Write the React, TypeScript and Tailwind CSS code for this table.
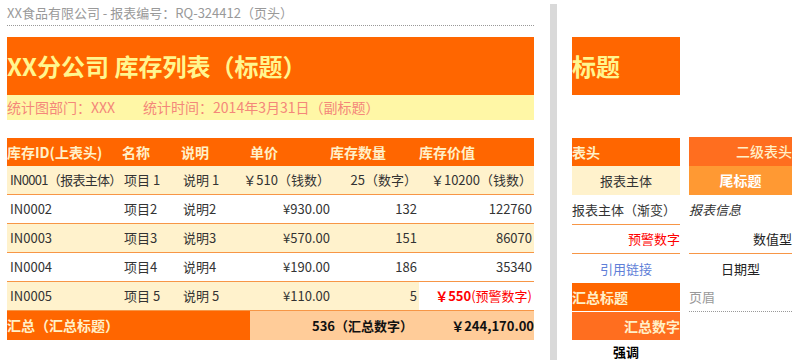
import React from 'react';

const font = { fontFamily: "'Noto Sans CJK SC', 'Noto Sans', sans-serif" };

const rows = [
  { id: 'IN0001（报表主体）', name: '项目 1', desc: '说明 1', price: '￥510（钱数）', qty: '25（数字）', value: '￥10200（钱数）', cream: true },
  { id: 'IN0002', name: '项目2', desc: '说明2', price: '¥930.00', qty: '132', value: '122760', cream: false },
  { id: 'IN0003', name: '项目3', desc: '说明3', price: '¥570.00', qty: '151', value: '86070', cream: true },
  { id: 'IN0004', name: '项目4', desc: '说明4', price: '¥190.00', qty: '186', value: '35340', cream: false },
];

const InventoryTable: React.FC = () => (
  <div className="mt-[18px] text-[13px] text-[#333]">
    {/* header */}
    <div className="grid grid-cols-[113px_59px_69px_80px_89px_117px] h-[28px] bg-[#FF6600] text-[14px] font-bold text-[#FFF0C8]">
      <div className="flex items-center">库存ID(上表头)</div>
      <div className="flex items-center pl-[2px]">名称</div>
      <div className="flex items-center pl-[2px]">说明</div>
      <div className="flex items-center pl-[2px]">单价</div>
      <div className="flex items-center pl-[2px]">库存数量</div>
      <div className="flex items-center pl-[2px]">库存价值</div>
    </div>

    {rows.map((r, i) => (
      <div
        key={r.id}
        className={`grid grid-cols-[113px_59px_69px_84px_87px_115px] h-[29px] border-b border-[#F79646] ${r.cream ? 'bg-[#FFF2CC]' : 'bg-white'}`}
      >
        <div className={`flex items-center pl-[3px] whitespace-nowrap ${i === 0 ? 'tracking-[-0.7px]' : ''}`}>{r.id}</div>
        <div className="flex items-center pl-[4px] whitespace-nowrap">{r.name}</div>
        <div className="flex items-center pl-[4px] whitespace-nowrap">{r.desc}</div>
        <div className="flex items-center justify-end pr-[2px] whitespace-nowrap">{r.price}</div>
        <div className="flex items-center justify-end pr-[2px] whitespace-nowrap">{r.qty}</div>
        <div className="flex items-center justify-end pr-[2px] whitespace-nowrap">{r.value}</div>
      </div>
    ))}

    {/* last row with warning value */}
    <div className="grid grid-cols-[113px_59px_69px_84px_87px_115px] h-[29px] border-b border-[#F79646] bg-[#FFF2CC]">
      <div className="flex items-center pl-[3px]">IN0005</div>
      <div className="flex items-center pl-[4px]">项目 5</div>
      <div className="flex items-center pl-[4px]">说明 5</div>
      <div className="flex items-center justify-end pr-[2px]">¥110.00</div>
      <div className="flex items-center justify-end pr-[2px]">5</div>
      <div className="flex items-center justify-end pr-[2px] bg-white text-[#FF0000] whitespace-nowrap">
        <span className="font-bold">￥550</span>(预警数字)
      </div>
    </div>

    {/* summary */}
    <div className="flex h-[29px] font-bold">
      <div className="w-[243px] flex items-center bg-[#FF6600] text-[14px] text-[#FFF0C8]">汇总（汇总标题）</div>
      <div className="flex-1 flex items-center bg-[#FFCC99] text-[#111]">
        <div className="w-[166px] text-right pr-[3px] whitespace-nowrap">536（汇总数字）</div>
        <div className="flex-1 text-right whitespace-nowrap">￥244,170.00</div>
      </div>
    </div>
  </div>
);

const LegendPanel: React.FC = () => (
  <div className="ml-[15px] pt-[37px] text-[13px] text-[#333]">
    <div className="w-[108px] h-[58px] flex items-center bg-[#FF6600] text-[24px] font-bold text-[#FFF68F]">标题</div>

    <div className="mt-[43px] flex gap-[9px]">
      {/* column A */}
      <div className="w-[108px]">
        <div className="h-[28px] flex items-center bg-[#FF6600] text-[14px] font-bold text-[#FFF0C8]">表头</div>
        <div className="h-[29px] flex items-center justify-center bg-[#FFF2CC]">报表主体</div>
        <div className="h-[30px] flex items-center border-b border-[#F79646] whitespace-nowrap">报表主体（渐变）</div>
        <div className="h-[29px] flex items-center justify-end border-b border-[#F79646] text-[#FF0000]">预警数字</div>
        <div className="h-[29px] flex items-center justify-center text-[#5F7FD8]">引用链接</div>
        <div className="h-[29px] flex items-center bg-[#FF6600] border-b border-white text-[14px] font-bold text-[#FFF0C8]">汇总标题</div>
        <div className="h-[28px] flex items-center justify-end bg-[#FF6E1F] text-[14px] font-bold text-[#FFF0C8]">汇总数字</div>
        <div className="h-[24px] flex items-center justify-center font-bold text-black">强调</div>
      </div>

      {/* column B */}
      <div className="w-[103px] -mt-[1px]">
        <div className="h-[29px] flex items-center justify-end bg-[#FF6E1F] text-[14px] font-medium text-[#FFF0C8] whitespace-nowrap">二级表头</div>
        <div className="h-[29px] flex items-center justify-center bg-[#FF9933] text-[14px] font-bold text-white">尾标题</div>
        <div className="h-[29px] flex items-center italic">报表信息</div>
        <div className="h-[30px] flex items-center justify-end border-b border-[#F79646] text-[#222]">数值型</div>
        <div className="h-[29px] flex items-center justify-center text-[#222]">日期型</div>
        <div className="h-[29px] flex items-center border-b border-dotted border-[#999] text-[#999]">页眉</div>
      </div>
    </div>
  </div>
);

export default function App() {
  return (
    <div className="w-[799px] h-[364px] overflow-hidden bg-white flex" style={font}>
      {/* report */}
      <div className="ml-[7px] w-[527px] shrink-0">
        <div className="h-[26px] pt-[3px] border-b border-dotted border-[#999] text-[13px] text-[#999] leading-[20px] whitespace-nowrap">
          XX食品有限公司 - 报表编号：RQ-324412（页头）
        </div>
        <div className="mt-[11px] h-[58px] flex items-center bg-[#FF6600] text-[24px] font-bold text-[#FFF68F] whitespace-nowrap">
          XX分公司 库存列表（标题）
        </div>
        <div className="h-[25px] flex items-center bg-[#FFF7A6] text-[14px] text-[#F4877A] whitespace-nowrap">
          <span>统计图部门：XXX</span>
          <span className="ml-[28px]">统计时间：2014年3月31日（副标题）</span>
        </div>
        <InventoryTable />
      </div>

      {/* divider */}
      <div className="ml-[16px] mt-[4px] w-[7px] h-[356px] bg-[#D9D9D9] shrink-0" />

      <LegendPanel />
    </div>
  );
}
